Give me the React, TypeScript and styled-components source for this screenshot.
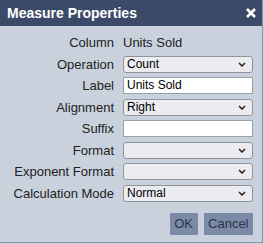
import React from "react";
import styled, { createGlobalStyle } from "styled-components";

const GlobalStyle = createGlobalStyle`
  html, body {
    margin: 0;
    padding: 0;
    background: #c9d1dd;
  }
  body {
    font-family: "Liberation Sans", Arial, sans-serif;
  }
`;

type Field = {
  label: string;
  kind: "text" | "input" | "select";
  value?: string;
};

const fields: Field[] = [
  { label: "Column", kind: "text", value: "Units Sold" },
  { label: "Operation", kind: "select", value: "Count" },
  { label: "Label", kind: "input", value: "Units Sold" },
  { label: "Alignment", kind: "select", value: "Right" },
  { label: "Suffix", kind: "input", value: "" },
  { label: "Format", kind: "select", value: "" },
  { label: "Exponent Format", kind: "select", value: "" },
  { label: "Calculation Mode", kind: "select", value: "Normal" },
];

const Chevron = () => (
  <svg width="8" height="5" viewBox="0 0 8 5">
    <path d="M1 1 L4 4 L7 1" fill="none" stroke="#222" strokeWidth="1.5" />
  </svg>
);

const CloseIcon = () => (
  <svg width="10" height="10" viewBox="0 0 10 10">
    <path d="M1 1 L9 9 M9 1 L1 9" stroke="#fff" strokeWidth="2.6" />
  </svg>
);

const App: React.FC = () => {
  return (
    <Dialog>
      <GlobalStyle />
      <TitleBar>
        <Title>Measure Properties</Title>
        <Close>
          <CloseIcon />
        </Close>
      </TitleBar>
      <Body>
        <Form>
          {fields.map((f) => (
            <React.Fragment key={f.label}>
              <Label>{f.label}</Label>
              {f.kind === "text" && <Value>{f.value}</Value>}
              {f.kind === "input" && <TextBox>{f.value}</TextBox>}
              {f.kind === "select" && (
                <SelectBox>
                  <span>{f.value}</span>
                  <Chevron />
                </SelectBox>
              )}
            </React.Fragment>
          ))}
        </Form>
        <Buttons>
          <Button>OK</Button>
          <Button>Cancel</Button>
        </Buttons>
      </Body>
    </Dialog>
  );
};

export default App;

const Dialog = styled.div`
  width: 262px;
  height: 242px;
  border-right: 1px solid #8c96aa;
  border-bottom: 1px solid #8c96aa;
  background: #c9d1dd;
  display: flex;
  flex-direction: column;
`;

const TitleBar = styled.div`
  height: 26px;
  background: #3c4a69;
  display: flex;
  align-items: center;
  justify-content: space-between;
  padding: 0 6px 0 7px;
`;

const Title = styled.div`
  color: #fff;
  font-weight: bold;
  font-size: 14px;
`;

const Close = styled.div`
  display: flex;
  align-items: center;
`;

const Body = styled.div`
  padding: 8px 9px 0 0;
  display: flex;
  flex-direction: column;
`;

const Form = styled.div`
  display: grid;
  grid-template-columns: 114px 130px;
  column-gap: 9px;
  grid-auto-rows: 17px;
  row-gap: 4.5px;
  align-items: center;
`;

const Label = styled.div`
  text-align: right;
  font-size: 13px;
  color: #222;
  white-space: nowrap;
`;

const Value = styled.div`
  font-size: 13px;
  color: #222;
`;

const TextBox = styled.div`
  height: 15px;
  background: #fff;
  border: 1px solid #9aa0aa;
  font-size: 12px;
  line-height: 15px;
  padding: 0 3px;
  color: #000;
`;

const SelectBox = styled.div`
  height: 15px;
  background: #ececf0;
  border: 1px solid #8f949c;
  border-radius: 3px;
  font-size: 12px;
  padding: 0 6px 0 3px;
  display: flex;
  align-items: center;
  justify-content: space-between;
  color: #000;
`;

const Buttons = styled.div`
  display: flex;
  justify-content: flex-end;
  gap: 6px;
  margin-top: 11px;
`;

const Button = styled.div`
  height: 22px;
  background: #7b8aa6;
  color: #2b3447;
  font-size: 13px;
  display: flex;
  align-items: center;
  justify-content: center;
  padding: 0 4.5px;
`;
